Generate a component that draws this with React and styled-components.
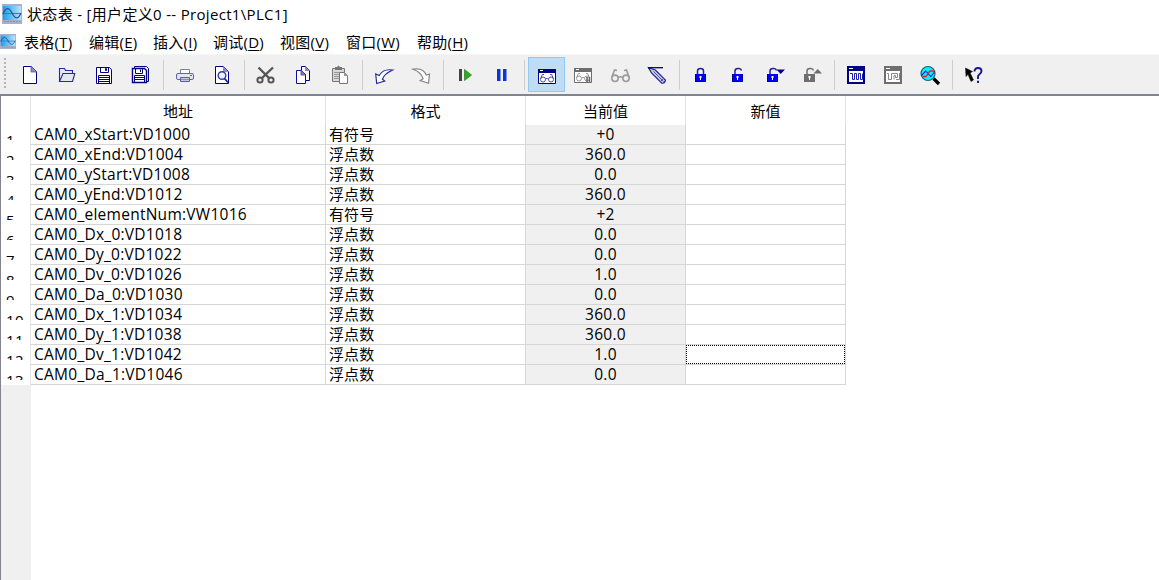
import React from "react";
import styled, { createGlobalStyle } from "styled-components";

const GlobalStyle = createGlobalStyle`
    body {
        margin: 0;
        background: #fff;
        overflow: hidden;
    }
    * {
        box-sizing: border-box;
    }
`;

const Window = styled.div`
    display: flex;
    flex-direction: column;
    width: 1159px;
    height: 580px;
    background: #fff;
    color: #000;
    font-family: "Open Sans", "Noto Sans CJK SC", sans-serif;
    font-size: 15px;
    line-height: 20px;
    white-space: pre;
`;

const TitleBar = styled.div`
    display: flex;
    align-items: center;
    height: 28px;
    padding-left: 2px;
    gap: 5px;
    svg {
        flex: none;
    }
`;

const Title = styled.span`
    letter-spacing: 0.32px;
`;

const MenuBar = styled.div`
    display: flex;
    height: 26px;
    padding-top: 4px;
    svg {
        flex: none;
        margin: 2px 8px 0 0;
    }
`;

const MenuItem = styled.span`
    width: ${({ $width }) => $width}px;
    letter-spacing: 0.25px;
    u {
        text-underline-offset: 2px;
        text-decoration-thickness: 1px;
    }
`;

const Toolbar = styled.div`
    display: flex;
    height: 42px;
    padding: 2px 0 0 4px;
    background: #f0f0f0;
    border-top: 1px solid #f5f5f5;
    border-bottom: 2px solid #82858f;
`;

const Grip = styled.div`
    width: 2px;
    height: 32px;
    margin: 1px 6px 0 0;
    background: repeating-linear-gradient(#b4b4b4 0 2px, #f0f0f0 2px 4px);
`;

const ToolButton = styled.div`
    width: 37px;
    height: 35px;
    background: ${({ $active }) => ($active ? "#c0dcf3" : "transparent")};
    box-shadow: ${({ $active }) => ($active ? "inset 0 0 0 1px #90c8f6" : "none")};
    svg {
        display: block;
    }
`;

const Separator = styled.div`
    width: 1px;
    height: 30px;
    margin: 3px 3px 0;
    background: #cdcdcd;
`;

const Sheet = styled.div`
    display: flex;
    flex: 1;
    border-left: 1px solid #82858f;
`;

const RowHeads = styled.div`
    width: 30px;
    background: #f0f0f0;
`;

const Corner = styled.div`
    height: 29px;
    background: #fff;
    border-right: 1px solid #e3e3e3;
`;

const RowHead = styled.div`
    height: 20px;
    padding: 5px 0 0 5px;
    background: #fff;
    border-right: 1px solid #e3e3e3;
    letter-spacing: 0.4px;
    div {
        height: 10px;
        overflow: hidden;
        line-height: 20px;
    }
`;

const Grid = styled.div`
    display: grid;
    grid-template-columns: 295px 200px 160px 160px;
    grid-template-rows: 29px;
    grid-auto-rows: 20px;
    align-content: start;
`;

const HeadCell = styled.div`
    padding-top: 5px;
    border-right: 1px solid #e3e3e3;
    text-align: center;
`;

const Cell = styled.div`
    padding-left: ${({ $center }) => ($center ? 0 : 3)}px;
    border-right: 1px solid #d6d6d6;
    border-bottom: 1px solid #d6d6d6;
    background: ${({ $shaded }) => ($shaded ? "#f0f0f0" : "#fff")};
    text-align: ${({ $center }) => ($center ? "center" : "left")};
    font-size: ${({ $latin }) => ($latin ? 15.5 : 15)}px;
    letter-spacing: ${({ $latin }) => ($latin ? 0.26 : 0.1)}px;
    line-height: 19px;
`;

const Focus = styled.div`
    height: 19px;
    border: 1px dotted #000;
`;

const NAVY = "#000084";
const GRAY = "#6e6e6e";

const AppIcon = ({ width = 20, height = 20 }) => (
    <svg width={width} height={height} viewBox="0 0 20 20" preserveAspectRatio="none">
        <defs>
            <linearGradient id="screen">
                <stop offset="0" stopColor="#16a0f0" />
                <stop offset="1" stopColor="#b9e4fb" />
            </linearGradient>
        </defs>
        <rect width="20" height="20" fill="#a9afca" />
        <rect x="1" y="2" width="18" height="14" fill="url(#screen)" />
        <path d="M1 9.5h18" stroke="#58719c" />
        <path d="M1 10C4 3 7 3 10 9s6 7 9 0" fill="none" stroke="#2d4f90" strokeWidth="1.2" />
        <path d="M2 17.5h16" stroke="#8990b4" strokeDasharray="2 1" />
    </svg>
);

const Glasses = ({ color, x = 0, y = 0 }) => (
    <g transform={`translate(${x} ${y})`} fill="none" stroke={color} strokeWidth="1">
        <circle cx="3.5" cy="7" r="2.5" />
        <circle cx="11.5" cy="7" r="2.5" />
        <path d="M6 6.5q1.5-1 3 0M1 6.5l1.8-4.5h1.7M14 6.5l-1.8-4.5h-1.7" />
    </g>
);

const Padlock = ({ color, x, open }) => (
    <g transform={`translate(${x} 0)`}>
        <path
            d={open ? "M3 17v-3q0-2.5 3-2.5h1q2 0 2.5 2" : "M2.5 17v-3q0-2.5 3-2.5t3 2.5v3"}
            fill="none"
            stroke={color === GRAY ? GRAY : "#20209a"}
            strokeWidth="1.5"
        />
        <rect y="17" width="11" height="8" fill={color} />
        <path d="M.5 17v7.5h10V17" fill="none" stroke={color === GRAY ? GRAY : "#000090"} />
        <path d="M4.5 19h2v2H6v2H5v-2h-.5z" fill="#fff" />
    </g>
);

const icons = {
    new: (
        <>
            <path d="M11.5 9.5h8l5 5v12h-13z" fill="#fff" stroke={NAVY} />
            <path d="M19 9v6h6z" fill="#8c8cc4" stroke="#5555a4" strokeWidth=".8" />
        </>
    ),
    open: (
        <g fill="#e6e6f2" stroke="#29299a" strokeWidth="1.1">
            <path d="M10.5 24.5v-13h5l1 2h7v3" />
            <path d="M10.5 24.5l3.5-8h11.8l-2.3 8z" />
        </g>
    ),
    save: (
        <>
            <path d="M10.5 10.5h13l2 2v14h-15z" fill="#fff" stroke={NAVY} />
            <path d="M14.5 10v5.5h8V10M19.5 11.5h1v2h-1zM12.5 26v-7.5h11V26M13 20.5h10M13 22.5h10M13 24.5h10" fill="none" stroke={NAVY} />
        </>
    ),
    saveAll: (
        <>
            <path d="M11.5 11V9.5h12l2 2v13H24" fill="none" stroke={NAVY} />
            <path d="M9.5 11.5h12l2 2v12h-14z" fill="#fff" stroke={NAVY} strokeWidth="1.4" />
            <path d="M12.5 12v4.5h7V12M17.5 12.5v2.5M11.5 25v-6.5h10V25M12 20.5h9M12 22.5h9" fill="none" stroke={NAVY} />
        </>
    ),
    print: (
        <>
            <path d="M13.5 17v-4.5h9V17" fill="#fff" stroke="#7a7ac0" />
            <rect x="9.5" y="16.5" width="17" height="6" rx="1.5" fill="#e4e4f2" stroke="#6262b5" />
            <path d="M13.5 20.5h9v4h-9z" fill="#fff" stroke="#5c5cb0" />
            <path d="M14 22.5h8" stroke="#8d8dc8" strokeWidth="2" />
            <path d="M23 18.5h2" stroke="#5c5cb0" />
        </>
    ),
    preview: (
        <>
            <path d="M11.5 9.5h8l5 5v12h-13z" fill="#fff" stroke={NAVY} />
            <path d="M19 9v6h6z" fill="#8c8cc4" />
            <circle cx="18" cy="18.5" r="3.8" fill="#e9f2ff" stroke="#3939a0" strokeWidth="1.4" />
            <path d="M20.5 21.5l3.5 4" stroke="#20208c" strokeWidth="1.8" />
        </>
    ),
    cut: (
        <g fill="none" stroke="#555" strokeWidth="2">
            <path d="M10.5 10.5L21 21M25 10.5L14 21" strokeWidth="2.4" />
            <circle cx="12" cy="23" r="2.6" />
            <circle cx="23" cy="23" r="2.6" />
        </g>
    ),
    copy: (
        <>
            <path d="M16.5 9.5h4l4 4v10h-8z" fill="#fff" stroke={NAVY} />
            <path d="M20 9v5h5z" fill="#8c8cc4" />
            <path d="M11.5 13.5h5l4 4v9h-9z" fill="#fff" stroke="#1010a0" />
            <path d="M16 13v5h5z" fill="#8080c0" stroke="#3d3da0" strokeWidth=".8" />
        </>
    ),
    paste: (
        <>
            <path d="M10.5 11.5h12v13h-12z" fill="#d8d8d8" stroke="#777" />
            <path d="M13 10h2l1.5-1.5L18 10h2v3h-7z" fill="#777" />
            <path d="M12 15.5h7M12 17.5h6M12 19.5h5M12 21.5h5" stroke="#999" />
            <path d="M17.5 15.5h5l3 3v8h-8z" fill="#fff" stroke="#777" />
            <path d="M22 15v4h4z" fill="#999" />
        </>
    ),
    undo: (
        <path d="M9.7 17l1 9.5 8-2.5-2.3-1.8q2-5.5 10.3-9.2-9.5-1.5-13.5 5.5z" fill="#fff" stroke="#29299a" strokeWidth="1.2" />
    ),
    redo: (
        <path d="M10 12.2q10-2 13.3 5.8l3.2-1-1 9.2-8.2-2.7 2.8-1.8Q18 15 10 12.2z" fill="#fff" stroke="#858585" strokeWidth="1.2" />
    ),
    run: (
        <>
            <rect x="12" y="12" width="3" height="12" fill="#444" />
            <path d="M17.5 12.5v11l7-5.5z" fill="#25b010" stroke="#4b8c4a" />
        </>
    ),
    pause: <path d="M13 12h3.5v12H13zM19 12h3.5v12H19z" fill="#0c36d2" />,
    chartStatus: (
        <>
            <path d="M10.5 12.5h17v14h-17z" fill="#fff" stroke={NAVY} />
            <path d="M10 12h18v4H10z" fill={NAVY} />
            <path d="M12 13.5h3" stroke="#fff" />
            <Glasses color="#4d4db1" x={11.5} y={15.5} />
        </>
    ),
    chartPause: (
        <>
            <path d="M9.5 11.5h17v14h-17z" fill="#fff" stroke={GRAY} />
            <path d="M9 11h18v4H9z" fill={GRAY} />
            <path d="M11 12.5h3" stroke="#fff" />
            <Glasses color="#999" x={10.5} y={14.5} />
            <path d="M22 20v5M24.5 20v5" stroke="#666" strokeWidth="1.6" />
        </>
    ),
    glasses: (
        <g fill="none" stroke="#9c9c9c" strokeWidth="1.6">
            <circle cx="13" cy="21.3" r="3.2" />
            <circle cx="24" cy="21.3" r="3.2" />
            <path d="M16.2 20.5q2.3-1.5 4.6 0M10 20l2.5-7 2.5.5M27 20l-2.5-7-2.5.5" />
        </g>
    ),
    pencil: (
        <>
            <path d="M9.5 10.7l3 5.3 10.3 10.2q3 .5 3.7-3L16.3 13z" fill="#c9c9e2" stroke="#20209a" strokeWidth="1.2" />
            <path d="M14.5 14.5l10 10M21.5 24.5l3-3" stroke="#4545a6" strokeWidth=".9" />
            <path d="M9 10.7h15" stroke={NAVY} strokeWidth="1.3" />
        </>
    ),
    lock: <Padlock color="#0000fb" x={12} />,
    unlock: <Padlock color="#0000fb" x={12} open />,
    unlockAll: (
        <>
            <Padlock color="#0000fb" x={10} open />
            <path d="M19.5 12.5H28L23.7 17z" fill="#000090" />
        </>
    ),
    lockAll: (
        <>
            <Padlock color={GRAY} x={10} open />
            <path d="M19.5 16.5H28L23.7 12z" fill={GRAY} />
        </>
    ),
    trend: (
        <>
            <path d="M10 10h16v16H10z" fill="#fff" stroke={NAVY} strokeWidth="2" />
            <path d="M9 9h18v5H9z" fill={NAVY} />
            <path d="M11 11.5h4" stroke="#fff" />
            <path d="M12 16.5h2.5v6h2v-6h2v6h2v-6h2v6h2v-6" fill="none" stroke="#1c1cb0" />
        </>
    ),
    trendPause: (
        <>
            <path d="M10 10h16v16H10z" fill="#fff" stroke={GRAY} strokeWidth="2" />
            <path d="M9 9h18v5H9z" fill={GRAY} />
            <path d="M11 11.5h4" stroke="#fff" />
            <path d="M12 16.5h1.5v6h3v-6h6v4h-2v-2h-1.5v4M24.5 16v6.5H21" fill="none" stroke="#888" />
        </>
    ),
    search: (
        <>
            <path d="M21.5 21.5l5.5 5.5" stroke="#000" strokeWidth="3.2" />
            <circle cx="16" cy="16.5" r="7" fill="#00f4fb" stroke="#186070" strokeWidth="1.2" />
            <path d="M9.5 18.5l4.2-4.5 5 5.5 4-4.5" fill="none" stroke="#1616e0" strokeWidth="1.1" />
            <path d="M10.5 19.5h3.5l4-5.5h3l1.5 2.5" fill="none" stroke="#e02030" strokeWidth="1.3" />
        </>
    ),
    help: (
        <>
            <path d="M9.5 11l7 3.5-2.3 1.5 3.3 7-2.5 1.5-3-7-2 2z" fill="#000" stroke="#222" strokeWidth=".6" />
            <path d="M18.5 14.5q0-3.5 3.5-3.5t3.5 3q0 1.8-2 3.2T22 20.5V22" fill="none" stroke="#17178e" strokeWidth="1.9" />
            <path d="M21 23.7h2v2.2h-2z" fill="#17178e" />
        </>
    ),
};

const groups = [
    ["new", "open", "save", "saveAll"],
    ["print", "preview"],
    ["cut", "copy", "paste"],
    ["undo", "redo"],
    ["run", "pause"],
    ["chartStatus", "chartPause", "glasses", "pencil"],
    ["lock", "unlock", "unlockAll", "lockAll"],
    ["trend", "trendPause", "search"],
    ["help"],
];

const menus = [
    { label: "表格", mnemonic: "T", width: 65 },
    { label: "编辑", mnemonic: "E", width: 64 },
    { label: "插入", mnemonic: "I", width: 60 },
    { label: "调试", mnemonic: "D", width: 67 },
    { label: "视图", mnemonic: "V", width: 66 },
    { label: "窗口", mnemonic: "W", width: 71 },
    { label: "帮助", mnemonic: "H", width: 60 },
];

const rows = [
    ["CAM0_xStart:VD1000", "有符号", "+0"],
    ["CAM0_xEnd:VD1004", "浮点数", "360.0"],
    ["CAM0_yStart:VD1008", "浮点数", "0.0"],
    ["CAM0_yEnd:VD1012", "浮点数", "360.0"],
    ["CAM0_elementNum:VW1016", "有符号", "+2"],
    ["CAM0_Dx_0:VD1018", "浮点数", "0.0"],
    ["CAM0_Dy_0:VD1022", "浮点数", "0.0"],
    ["CAM0_Dv_0:VD1026", "浮点数", "1.0"],
    ["CAM0_Da_0:VD1030", "浮点数", "0.0"],
    ["CAM0_Dx_1:VD1034", "浮点数", "360.0"],
    ["CAM0_Dy_1:VD1038", "浮点数", "360.0"],
    ["CAM0_Dv_1:VD1042", "浮点数", "1.0"],
    ["CAM0_Da_1:VD1046", "浮点数", "0.0"],
];

const focusedRow = 11;

const App = () => (
    <Window>
        <GlobalStyle />
        <TitleBar>
            <AppIcon />
            <Title>{"状态表 - [用户定义0 -- Project1\\PLC1]"}</Title>
        </TitleBar>
        <MenuBar>
            <AppIcon width={16} height={15} />
            {menus.map(({ label, mnemonic, width }) => (
                <MenuItem key={mnemonic} $width={width}>
                    {label}(<u>{mnemonic}</u>)
                </MenuItem>
            ))}
        </MenuBar>
        <Toolbar>
            <Grip />
            {groups.map((group, i) => (
                <React.Fragment key={group[0]}>
                    {i > 0 && <Separator />}
                    {group.map((name) => (
                        <ToolButton key={name} $active={name === "chartStatus"}>
                            <svg width="37" height="35" viewBox="0 0 37 35">{icons[name]}</svg>
                        </ToolButton>
                    ))}
                </React.Fragment>
            ))}
        </Toolbar>
        <Sheet>
            <RowHeads>
                <Corner />
                {rows.map((row, i) => (
                    <RowHead key={row[0]}>
                        <div>{i + 1}</div>
                    </RowHead>
                ))}
            </RowHeads>
            <Grid>
                <HeadCell>地址</HeadCell>
                <HeadCell>格式</HeadCell>
                <HeadCell>当前值</HeadCell>
                <HeadCell>新值</HeadCell>
                {rows.map(([address, format, value], i) => (
                    <React.Fragment key={address}>
                        <Cell $latin>{address}</Cell>
                        <Cell>{format}</Cell>
                        <Cell $latin $shaded $center>{value}</Cell>
                        <Cell $center>{i === focusedRow && <Focus />}</Cell>
                    </React.Fragment>
                ))}
            </Grid>
        </Sheet>
    </Window>
);

export default App;
